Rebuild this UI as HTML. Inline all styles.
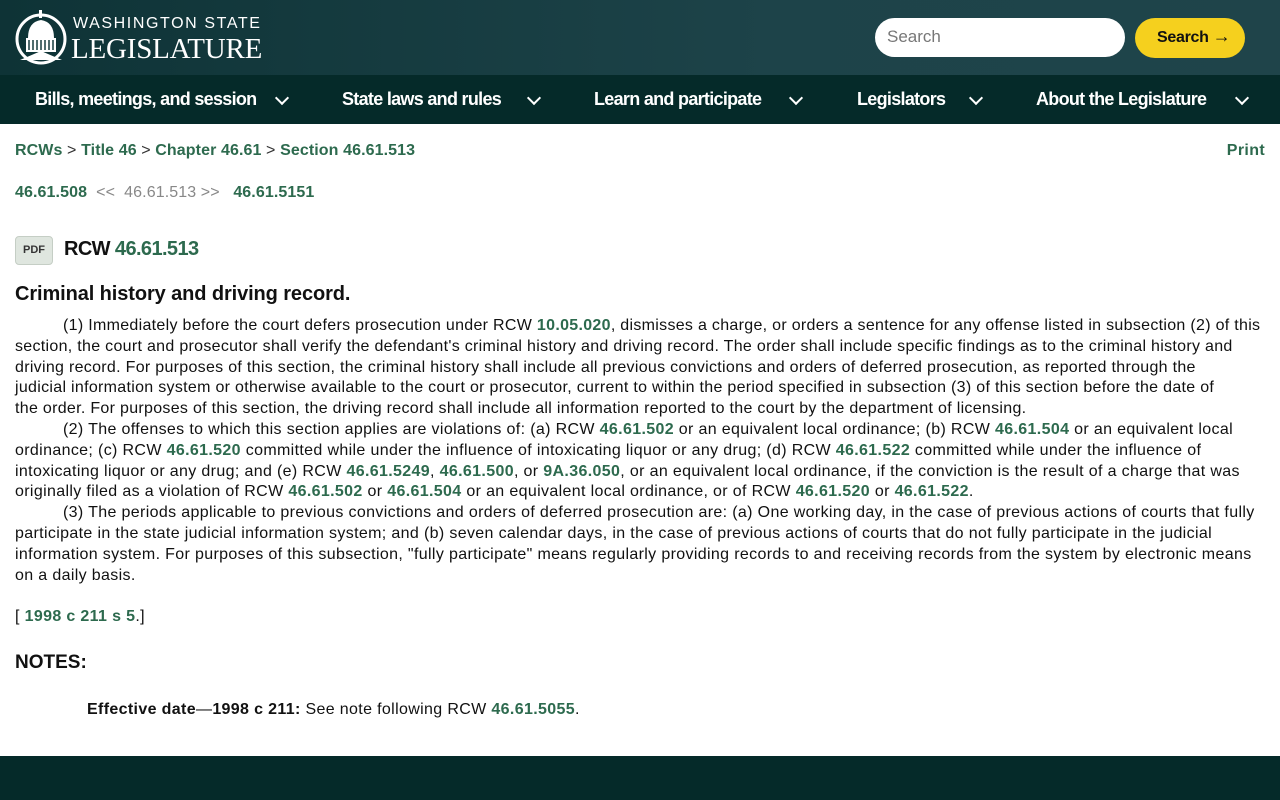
<!DOCTYPE html>
<html><head><meta charset="utf-8"><style>
*{box-sizing:border-box}
body{margin:0;font-family:"Liberation Sans",sans-serif;color:#111;background:#fff;width:1280px;height:800px;overflow:hidden;position:relative}
.top{height:75px;background:linear-gradient(90deg,#0e3336,#1d4349 60%,#1f444a);position:relative}
.nav{height:49px;background:#052a29;position:relative}
.nav span{position:absolute;top:14px;color:#fff;font-weight:bold;font-size:18px;letter-spacing:-0.7px}
.chev{position:absolute;top:18px;width:10px;height:10px;border-right:2.5px solid #fff;border-bottom:2.5px solid #fff;transform:rotate(45deg)}
a{color:#2d6a4e;font-weight:bold;text-decoration:none}
.c{font-size:16px;line-height:20.8px;letter-spacing:0.35px}
p{margin:0}
</style></head><body>
<div class="top">
 <svg style="position:absolute;left:14px;top:8px" width="56" height="58" viewBox="0 0 56 58">
  <circle cx="27" cy="31" r="24" fill="none" stroke="#fff" stroke-width="3"/>
  <rect x="25" y="2" width="3" height="8" fill="#fff"/>
  <path d="M14 30 Q14 14 27 12 Q40 14 40 30Z" fill="#fff"/>
  <rect x="12" y="30" width="30" height="14" fill="#fff"/>
  <path d="M15 32v10M19 32v10M23 32v10M27 32v10M31 32v10M35 32v10M39 32v10" stroke="#163b3f" stroke-width="1.5"/>
  <path d="M6 52 L27 43 L48 52Z" fill="#fff"/>
 </svg>
 <div style="position:absolute;left:73px;top:15px;color:#fff;font-size:16px;letter-spacing:1.6px">WASHINGTON STATE</div>
 <div style="position:absolute;left:71px;top:33px;color:#fff;font-family:'Liberation Serif',serif;font-size:29px;letter-spacing:-0.2px">LEGISLATURE</div>
 <div style="position:absolute;left:875px;top:18px;width:250px;height:39px;background:#fff;border-radius:20px;color:#777;font-size:17px;padding:9px 12px">Search</div>
 <div style="position:absolute;left:1135px;top:18px;width:110px;height:40px;background:#f5d01e;border-radius:20px;color:#111;font-size:16px;font-weight:bold;padding:11px 0 0 22px;letter-spacing:-0.3px">Search <span style="font-size:18px;line-height:10px">→</span></div>
</div>
<div class="nav">
 <span style="left:35px">Bills, meetings, and session</span><i class="chev" style="left:277px"></i>
 <span style="left:342px">State laws and rules</span><i class="chev" style="left:529px"></i>
 <span style="left:594px">Learn and participate</span><i class="chev" style="left:791px"></i>
 <span style="left:857px">Legislators</span><i class="chev" style="left:971px"></i>
 <span style="left:1036px">About the Legislature</span><i class="chev" style="left:1237px"></i>
</div>
<div class="c" style="position:absolute;left:15px;top:141px;color:#333;letter-spacing:0.1px"><a>RCWs</a> &gt; <a>Title 46</a> &gt; <a>Chapter 46.61</a> &gt; <a>Section 46.61.513</a></div>
<div class="c" style="position:absolute;right:15px;top:141px"><a>Print</a></div>
<div class="c" style="position:absolute;left:15px;top:183px;color:#888;letter-spacing:0.1px"><a>46.61.508</a> &nbsp;&lt;&lt; &nbsp;46.61.513 &gt;&gt; &nbsp;&nbsp;<a>46.61.5151</a></div>
<div style="position:absolute;left:15px;top:236px;width:38px;height:29px;background:#dfe6df;border:1px solid #c5cec5;border-radius:4px;font-size:11px;font-weight:bold;color:#333;text-align:center;line-height:27px">PDF</div>
<div style="position:absolute;left:64px;top:238px;font-size:20px;font-weight:bold;letter-spacing:-0.6px">RCW <a>46.61.513</a></div>
<div style="position:absolute;left:15px;top:283px;font-size:20px;font-weight:bold;letter-spacing:-0.1px">Criminal history and driving record.</div>
<div class="c" style="position:absolute;left:15px;top:316px;width:1252px">
<p style="text-indent:48px;letter-spacing:0.3px">(1) Immediately before the court defers prosecution under RCW <a>10.05.020</a>, dismisses a charge, or orders a sentence for any offense listed in subsection (2) of this<br>section, the court and prosecutor shall verify the defendant's criminal history and driving record. The order shall include specific findings as to the criminal history and<br>driving record. For purposes of this section, the criminal history shall include all previous convictions and orders of deferred prosecution, as reported through the<br>judicial information system or otherwise available to the court or prosecutor, current to within the period specified in subsection (3) of this section before the date of<br>the order. For purposes of this section, the driving record shall include all information reported to the court by the department of licensing.</p>
<p style="text-indent:48px">(2) The offenses to which this section applies are violations of: (a) RCW <a>46.61.502</a> or an equivalent local ordinance; (b) RCW <a>46.61.504</a> or an equivalent local ordinance; (c) RCW <a>46.61.520</a> committed while under the influence of intoxicating liquor or any drug; (d) RCW <a>46.61.522</a> committed while under the influence of intoxicating liquor or any drug; and (e) RCW <a>46.61.5249</a>, <a>46.61.500</a>, or <a>9A.36.050</a>, or an equivalent local ordinance, if the conviction is the result of a charge that was originally filed as a violation of RCW <a>46.61.502</a> or <a>46.61.504</a> or an equivalent local ordinance, or of RCW <a>46.61.520</a> or <a>46.61.522</a>.</p>
<p style="text-indent:48px">(3) The periods applicable to previous convictions and orders of deferred prosecution are: (a) One working day, in the case of previous actions of courts that fully participate in the state judicial information system; and (b) seven calendar days, in the case of previous actions of courts that do not fully participate in the judicial information system. For purposes of this subsection, "fully participate" means regularly providing records to and receiving records from the system by electronic means on a daily basis.</p>
</div>
<div class="c" style="position:absolute;left:15px;top:607px">[ <a>1998 c 211 s 5</a>.]</div>
<div style="position:absolute;left:15px;top:652px;font-size:19px;font-weight:bold">NOTES:</div>
<div class="c" style="position:absolute;left:87px;top:700px"><b>Effective date</b>—<b>1998 c 211:</b> See note following RCW <a>46.61.5055</a>.</div>
<div style="position:absolute;left:0;top:756px;width:1280px;height:44px;background:#052a29"></div>
</body></html>
